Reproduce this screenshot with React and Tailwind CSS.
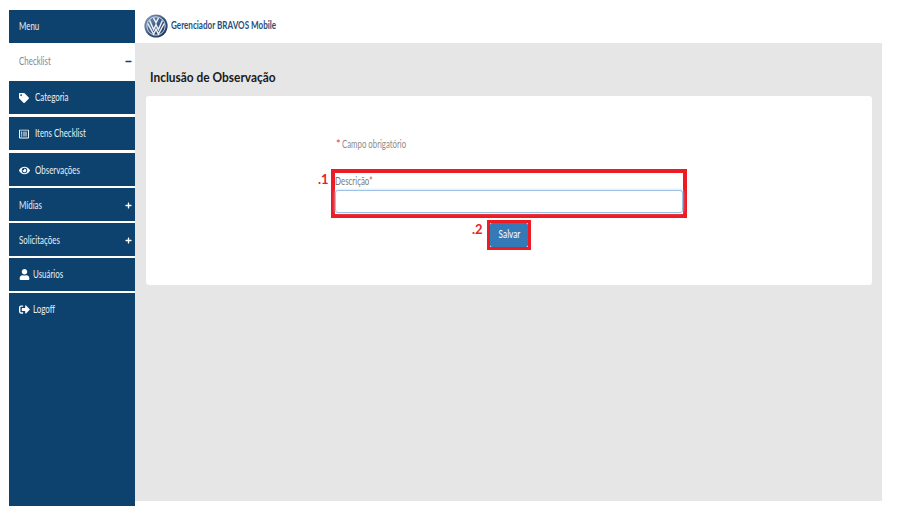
import { FaTag, FaRegListAlt, FaEye, FaUser, FaSignOutAlt, FaPlus, FaMinus } from "react-icons/fa";

const font = "font-['Lato',sans-serif]";
const narrow = "inline-block origin-left scale-x-[0.72] text-[11px] whitespace-nowrap";

const MenuItem = ({ label, icon, className = "", gap = "gap-[6px]", sign }) => (
  <div className={`flex items-center justify-between pl-[10px] pr-[3px] bg-[#0d426e] text-[#e8eef3] ${className}`}>
    <span className={`flex items-center ${gap}`}>
      {icon}
      <span className={narrow}>{label}</span>
    </span>
    {sign}
  </div>
);

const VwLogo = () => (
  <svg width="24" height="24" viewBox="0 0 24 24">
    <defs>
      <linearGradient id="ring" x1="0" y1="0" x2="1" y2="1">
        <stop offset="0" stopColor="#8fa6c4" />
        <stop offset="0.55" stopColor="#34527f" />
        <stop offset="1" stopColor="#1c2f50" />
      </linearGradient>
    </defs>
    <circle cx="12" cy="12" r="11.6" fill="url(#ring)" />
    <circle cx="12" cy="12" r="9.2" fill="none" stroke="#dfe6ef" strokeWidth="0.9" />
    <path d="M5.6 6.5 L9.6 15.5 L12 10.6 L14.4 15.5 L18.4 6.5" fill="none" stroke="#eef2f7" strokeWidth="1.5" />
    <path d="M9.5 4 L12 8.6 L14.5 4" fill="none" stroke="#eef2f7" strokeWidth="1.5" />
    <path d="M3.8 9.5 L9.6 20.2 L12 15.2 L14.4 20.2 L20.2 9.5" fill="none" stroke="#eef2f7" strokeWidth="1.4" />
  </svg>
);

const App = () => {
  return (
    <div className={`flex w-[900px] h-[506px] overflow-hidden bg-white pl-[9px] pt-[10px] ${font}`}>
      <aside className="flex flex-col w-[126px] h-[496px]">
        <MenuItem label="Menu" className="h-[33px] shrink-0" />
        <div className="flex items-center justify-between h-[37px] shrink-0 mb-[1px] pl-[10px] pr-[3px] bg-white text-[#8a8494]">
          <span className={narrow}>Checklist</span>
          <FaMinus className="text-[#0d426e] text-[7px]" />
        </div>
        <MenuItem label="Categoria" className="h-[33px] shrink-0 mb-[3px]" icon={<FaTag className="text-[10px] text-white" />} />
        <MenuItem label="Itens Checklist" className="h-[33px] shrink-0 mb-[3px]" icon={<FaRegListAlt className="text-[10px] text-white" />} />
        <MenuItem label="Observações" gap="gap-[5px]" className="h-[33px] pt-[1px] shrink-0 mb-[2px]" icon={<FaEye className="text-[11px] text-white" />} />
        <MenuItem label="Mídias" className="h-[33px] pt-[1px] shrink-0 mb-[2px]" sign={<FaPlus className="text-white text-[7px]" />} />
        <MenuItem label="Solicitações" className="h-[33px] pt-[1px] shrink-0 mb-[2px]" sign={<FaPlus className="text-white text-[7px]" />} />
        <MenuItem label="Usuários" gap="gap-[3px]" className="h-[33px] shrink-0 mb-[2px]" icon={<FaUser className="text-[11px] text-white" />} />
        <div className="flex-1 bg-[#0d426e] text-[#e8eef3] pl-[10px] pt-[8px]">
          <span className="flex items-center gap-[3px]">
            <FaSignOutAlt className="text-[11px] text-white" />
            <span className={narrow}>Logoff</span>
          </span>
        </div>
      </aside>

      <main className="flex flex-col w-[747px]">
        <header className="flex items-center h-[33px] shrink-0 gap-[3px] pl-[9px] pb-[2px]">
          <VwLogo />
          <span className="inline-block origin-left scale-x-[0.735] text-[11px] font-bold text-[#2b4f78] whitespace-nowrap">Gerenciador BRAVOS Mobile</span>
        </header>
        <section className="flex flex-col h-[458px] bg-[#e6e6e6] pt-[26px] pl-[11px] pr-[10px]">
          <h1 className="pl-[4px] h-[27px] text-[14px] leading-[16px] font-bold text-[#1a1a1a] whitespace-nowrap">
            <span className="inline-block origin-left scale-x-[0.85]">Inclusão de Observação</span>
          </h1>
          <div className="relative flex flex-col h-[189px] rounded-[3px] bg-white pl-[185px] pr-[185px] pt-[42px]">
            <p className="flex pl-[5px] text-[11px] leading-[12px] text-[#8b8b8b]">
              <span className="text-[#e0403f] mr-[1px]">*</span>
              <span className="inline-block origin-left scale-x-[0.71] whitespace-nowrap">Campo obrigatório</span>
            </p>
            <div className="relative mt-[19px] border-[4px] border-[#ed1c24] h-[49px] w-[356px] pt-[1px]">
              <span className="absolute -left-[17px] -top-[2px] text-[13px] font-bold leading-[16px] text-[#ed1c24]">.1</span>
              <label className="block h-[13px] text-[11px] leading-[13px] text-[#7c7c7c]">
                <span className={narrow}>Descrição<span className="text-[#e0403f]">*</span></span>
              </label>
              <input className="block mt-[3px] h-[23px] w-[348px] rounded-[3px] border border-[#9cc2e6] bg-white shadow-[0_0_3px_#bcd7f0] outline-none" />
            </div>
            <div className="relative mt-[2px] ml-[156px] flex items-center justify-center h-[30px] w-[44px] border-[3px] border-[#ed1c24]">
              <span className="absolute -left-[18px] -top-[2px] text-[13px] font-bold leading-[16px] text-[#ed1c24]">.2</span>
              <button className="flex items-center justify-center h-[24px] w-[38px] pb-[2px] rounded-[2px] bg-[#337ab7] text-white">
                <span className="inline-block scale-x-[0.75] text-[11px]">Salvar</span>
              </button>
            </div>
          </div>
        </section>
      </main>
    </div>
  );
};

export default App;
